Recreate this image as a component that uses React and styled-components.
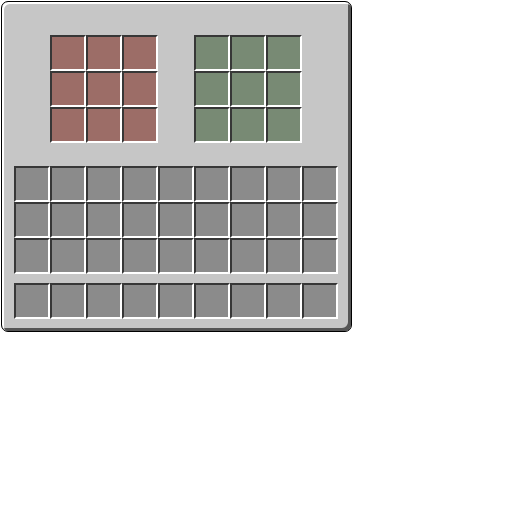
import React from 'react';
import styled, { createGlobalStyle } from 'styled-components';

const GlobalStyle = createGlobalStyle`
  html, body {
    margin: 0;
    padding: 0;
    background: #ffffff;
    font-family: 'Liberation Sans', Arial, sans-serif;
  }
`;

const Panel = styled.div`
  box-sizing: border-box;
  margin: 1px 0 0 1px;
  width: 351px;
  padding: 33px 13px 12px 12px;
  background: #c6c6c6;
  border: 1px solid #000;
  border-radius: 7px;
  box-shadow: inset 2px 2px 0 #ffffff, inset -3px -3px 0 #555555;
  display: flex;
  flex-direction: column;
`;

const CraftRow = styled.div`
  display: flex;
  justify-content: center;
  gap: 36px;
`;

const Grid = styled.div`
  display: grid;
  grid-template-columns: repeat(${(p) => p.cols}, 36px);
  grid-auto-rows: 36px;
`;

const Inventory = styled.div`
  display: flex;
  flex-direction: column;
  margin-top: 23px;
  gap: 9px;
`;

const Slot = styled.div`
  box-sizing: border-box;
  width: 36px;
  height: 36px;
  background: ${(p) => p.tint};
  border-style: solid;
  border-width: 2px;
  border-color: #373737 #ffffff #ffffff #373737;
`;

const tints = {
  red: '#9c6d67',
  green: '#788a74',
  gray: '#8b8b8b',
};

const slots = (n, tint) =>
  Array.from({ length: n }, (_, i) => <Slot key={i} tint={tints[tint]} />);

export default function App() {
  return (
    <>
      <GlobalStyle />
      <Panel>
        <CraftRow>
          <Grid cols={3}>{slots(9, 'red')}</Grid>
          <Grid cols={3}>{slots(9, 'green')}</Grid>
        </CraftRow>
        <Inventory>
          <Grid cols={9}>{slots(27, 'gray')}</Grid>
          <Grid cols={9}>{slots(9, 'gray')}</Grid>
        </Inventory>
      </Panel>
    </>
  );
}
